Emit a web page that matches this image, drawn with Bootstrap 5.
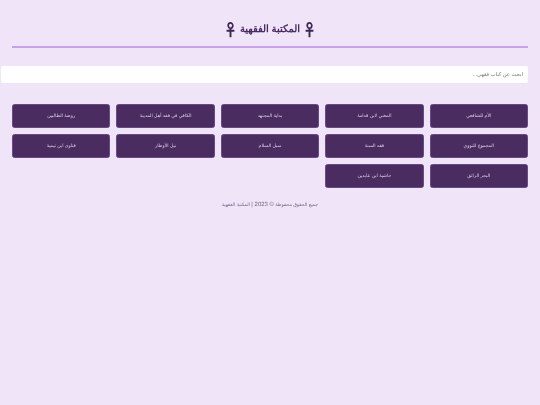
<!DOCTYPE html>
<html lang="ar" dir="rtl">
<head>
<meta charset="utf-8">
<title>المكتبة الفقهية</title>
<link href="https://cdn.jsdelivr.net/npm/bootstrap@5.3.0/dist/css/bootstrap.min.css" rel="stylesheet">
<style>
html,body{height:100%}
body{background:#f0e4f9;font-family:"Liberation Sans",Arial,sans-serif;color:#4a2c60;min-height:405px;text-rendering:geometricPrecision}
.lib-wrap{padding:0 12px 0 1px;will-change:transform}
.lib-head{margin:0 0 18px 11px;height:48px;border-bottom:2px solid #c7a2e8;padding-top:20px;display:flex;justify-content:center;align-items:flex-start}
.lib-head h1{font-size:10px;font-weight:700;line-height:20px;margin:0;color:#4a2c60;display:flex;align-items:center;gap:5px}
.lib-ankh{width:9px;height:16px;flex:none}
.lib-search{display:block;width:100%;height:17px;font-size:5.3px;padding:0 5px;border:0;border-radius:2px;background:#fff;color:#666;margin-bottom:21px;text-rendering:geometricPrecision}
.lib-search::placeholder{color:#777;opacity:1}
.lib-grid{display:grid;grid-template-columns:repeat(5,1fr);gap:6px;margin-left:11px}
.lib-btn{height:24px;padding:0 4px;font-size:4.7px;line-height:1;color:#ddd0e6;background:#4a2c60;border:1px solid #6a4a85;border-radius:2.5px;text-rendering:geometricPrecision;--bs-btn-hover-bg:#4a2c60;--bs-btn-hover-color:#fff}
.lib-foot{margin:13px 0 0 11px;text-align:center;font-size:4.7px;line-height:8px;color:#75687f}
.lib-num{font-size:6px}
</style>
</head>
<body>
<div class="lib-wrap">
  <header class="lib-head">
    <h1><svg class="lib-ankh" viewBox="0 0 9 16" aria-hidden="true"><ellipse cx="4.5" cy="3.6" rx="2.3" ry="2.7" fill="none" stroke="#3f2554" stroke-width="1.7"/><path d="M4.5 6.3V15.2M.6 8.8H8.4" fill="none" stroke="#3f2554" stroke-width="1.9"/></svg> المكتبة الفقهية <svg class="lib-ankh" viewBox="0 0 9 16" aria-hidden="true"><ellipse cx="4.5" cy="3.6" rx="2.3" ry="2.7" fill="none" stroke="#3f2554" stroke-width="1.7"/><path d="M4.5 6.3V15.2M.6 8.8H8.4" fill="none" stroke="#3f2554" stroke-width="1.9"/></svg></h1>
  </header>
  <input class="lib-search" type="text" placeholder="ابحث عن كتاب فقهي...">
  <div class="lib-grid">
    <button class="btn lib-btn" type="button">الأم للشافعي</button>
    <button class="btn lib-btn" type="button">المغني لابن قدامة</button>
    <button class="btn lib-btn" type="button">بداية المجتهد</button>
    <button class="btn lib-btn" type="button">الكافي في فقه أهل المدينة</button>
    <button class="btn lib-btn" type="button">روضة الطالبين</button>
    <button class="btn lib-btn" type="button">المجموع للنووي</button>
    <button class="btn lib-btn" type="button">فقه السنة</button>
    <button class="btn lib-btn" type="button">سبل السلام</button>
    <button class="btn lib-btn" type="button">نيل الأوطار</button>
    <button class="btn lib-btn" type="button">فتاوى ابن تيمية</button>
    <button class="btn lib-btn" type="button">البحر الرائق</button>
    <button class="btn lib-btn" type="button">حاشية ابن عابدين</button>
  </div>
  <footer class="lib-foot">جميع الحقوق محفوظة <span class="lib-num">© 2023 |</span> المكتبة الفقهية</footer>
</div>
<script src="https://cdn.jsdelivr.net/npm/bootstrap@5.3.0/dist/js/bootstrap.bundle.min.js"></script>
</body>
</html>
